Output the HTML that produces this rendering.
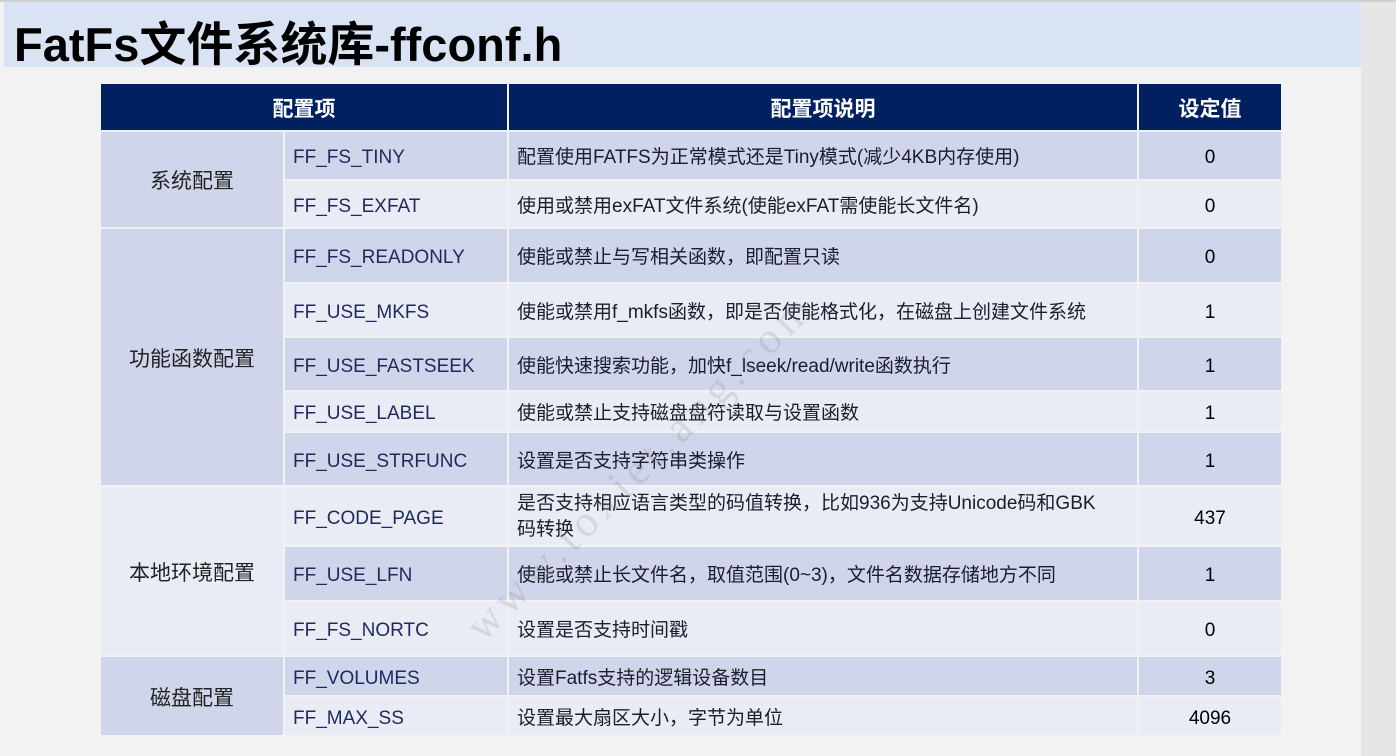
<!DOCTYPE html><html><head><meta charset="utf-8"><style>
body{margin:0;width:1396px;height:756px;background:#f2f2f2;position:relative;overflow:hidden;font-family:"Liberation Sans","Noto Sans CJK SC",sans-serif}
.hd{position:absolute;left:4px;top:2px;width:1357px;height:65px;background:#dae3f3}
.top{position:absolute;left:0;top:0;width:1396px;height:2px;background:#cfcfcf}
.sb{position:absolute;left:1361px;top:2px;width:35px;height:754px;background:#e6e6e6}
.t{position:absolute;left:14px;top:6px;font-size:47px;font-weight:bold;color:#000;letter-spacing:0px}
.c{position:absolute;display:flex;align-items:center;box-sizing:border-box;font-size:19px;line-height:26px;padding-top:5px}
.h{background:#002060;color:#fff;font-weight:bold;justify-content:center;font-size:21px}
.d{background:#cfd5ea}.l{background:#e9ebf5}
.n{color:#1f2a5c;padding-left:8px}.x{color:#1c1c2c;padding-left:8px;padding-right:20px}.v{justify-content:center;color:#000}.g{justify-content:center;color:#222;font-size:21px}
.wm{position:absolute;left:455px;top:615px;font-size:44px;color:rgba(120,120,120,0.18);transform:rotate(-45deg);transform-origin:left top;font-family:"Liberation Serif",serif;white-space:nowrap;letter-spacing:6px}
</style></head><body>
<div class="top"></div><div class="hd"></div><div class="sb"></div>
<div class="t">FatFs文件系统库-ffconf.h</div>
<div class="c h" style="left:101px;top:84px;width:406px;height:46px">配置项</div>
<div class="c h" style="left:509px;top:84px;width:628px;height:46px">配置项说明</div>
<div class="c h" style="left:1139px;top:84px;width:142px;height:46px">设定值</div>

<div class="c d g" style="left:101px;top:132px;width:182px;height:95px">系统配置</div>
<div class="c d g" style="left:101px;top:229px;width:182px;height:256px">功能函数配置</div>
<div class="c l g" style="left:101px;top:487px;width:182px;height:168px">本地环境配置</div>
<div class="c d g" style="left:101px;top:657px;width:182px;height:78px">磁盘配置</div>

<div class="c d n" style="left:285px;top:132px;width:222px;height:47px">FF_FS_TINY</div>
<div class="c d x" style="left:509px;top:132px;width:628px;height:47px">配置使用FATFS为正常模式还是Tiny模式(减少4KB内存使用)</div>
<div class="c d v" style="left:1139px;top:132px;width:142px;height:47px">0</div>

<div class="c l n" style="left:285px;top:181px;width:222px;height:46px">FF_FS_EXFAT</div>
<div class="c l x" style="left:509px;top:181px;width:628px;height:46px">使用或禁用exFAT文件系统(使能exFAT需使能长文件名)</div>
<div class="c l v" style="left:1139px;top:181px;width:142px;height:46px">0</div>

<div class="c d n" style="left:285px;top:229px;width:222px;height:53px">FF_FS_READONLY</div>
<div class="c d x" style="left:509px;top:229px;width:628px;height:53px">使能或禁止与写相关函数，即配置只读</div>
<div class="c d v" style="left:1139px;top:229px;width:142px;height:53px">0</div>

<div class="c l n" style="left:285px;top:284px;width:222px;height:52px">FF_USE_MKFS</div>
<div class="c l x" style="left:509px;top:284px;width:628px;height:52px">使能或禁用f_mkfs函数，即是否使能格式化，在磁盘上创建文件系统</div>
<div class="c l v" style="left:1139px;top:284px;width:142px;height:52px">1</div>

<div class="c d n" style="left:285px;top:338px;width:222px;height:52px">FF_USE_FASTSEEK</div>
<div class="c d x" style="left:509px;top:338px;width:628px;height:52px">使能快速搜索功能，加快f_lseek/read/write函数执行</div>
<div class="c d v" style="left:1139px;top:338px;width:142px;height:52px">1</div>

<div class="c l n" style="left:285px;top:392px;width:222px;height:39px">FF_USE_LABEL</div>
<div class="c l x" style="left:509px;top:392px;width:628px;height:39px">使能或禁止支持磁盘盘符读取与设置函数</div>
<div class="c l v" style="left:1139px;top:392px;width:142px;height:39px">1</div>

<div class="c d n" style="left:285px;top:433px;width:222px;height:52px">FF_USE_STRFUNC</div>
<div class="c d x" style="left:509px;top:433px;width:628px;height:52px">设置是否支持字符串类操作</div>
<div class="c d v" style="left:1139px;top:433px;width:142px;height:52px">1</div>

<div class="c l n" style="left:285px;top:487px;width:222px;height:58px">FF_CODE_PAGE</div>
<div class="c l x" style="left:509px;top:487px;width:628px;height:58px;padding-top:2px">是否支持相应语言类型的码值转换，比如936为支持Unicode码和GBK<br>码转换</div>
<div class="c l v" style="left:1139px;top:487px;width:142px;height:58px">437</div>

<div class="c d n" style="left:285px;top:547px;width:222px;height:53px">FF_USE_LFN</div>
<div class="c d x" style="left:509px;top:547px;width:628px;height:53px">使能或禁止长文件名，取值范围(0~3)，文件名数据存储地方不同</div>
<div class="c d v" style="left:1139px;top:547px;width:142px;height:53px">1</div>

<div class="c l n" style="left:285px;top:602px;width:222px;height:53px">FF_FS_NORTC</div>
<div class="c l x" style="left:509px;top:602px;width:628px;height:53px">设置是否支持时间戳</div>
<div class="c l v" style="left:1139px;top:602px;width:142px;height:53px">0</div>

<div class="c d n" style="left:285px;top:657px;width:222px;height:38px">FF_VOLUMES</div>
<div class="c d x" style="left:509px;top:657px;width:628px;height:38px">设置Fatfs支持的逻辑设备数目</div>
<div class="c d v" style="left:1139px;top:657px;width:142px;height:38px">3</div>

<div class="c l n" style="left:285px;top:697px;width:222px;height:38px">FF_MAX_SS</div>
<div class="c l x" style="left:509px;top:697px;width:628px;height:38px">设置最大扇区大小，字节为单位</div>
<div class="c l v" style="left:1139px;top:697px;width:142px;height:38px">4096</div>

<div class="wm">www.toxiet.ang.com</div>
</body></html>
